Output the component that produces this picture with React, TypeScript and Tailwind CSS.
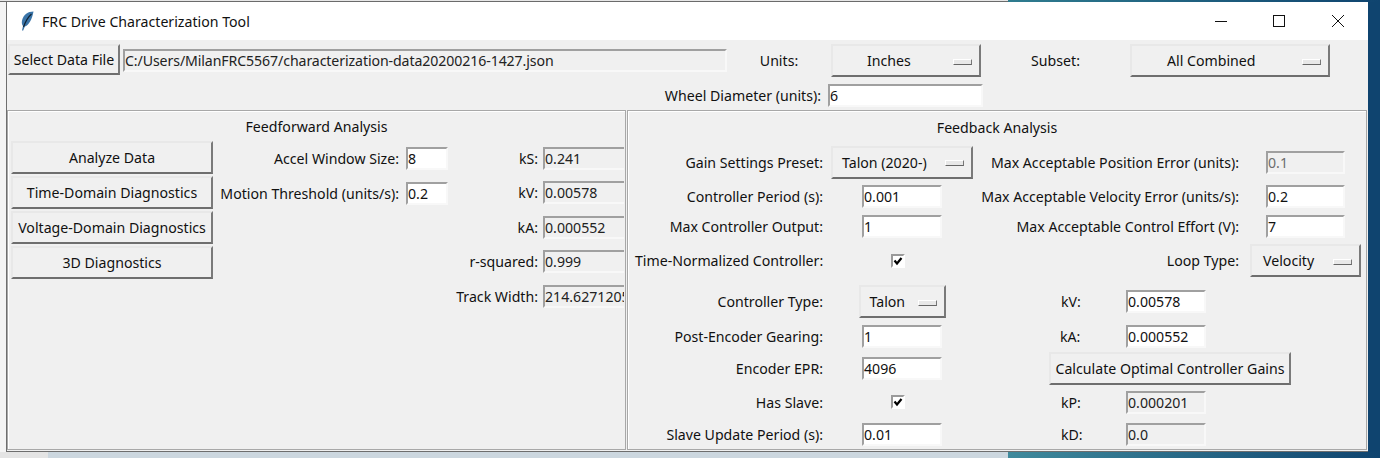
const raised = 'border-2 border-t-[#e8e8e8] border-l-[#e8e8e8] border-r-[#7a7a7a] border-b-[#6e6e6e] bg-[#f0f0f0]'

function Btn({ label, className = '' }: { label: string; className?: string }) {
  return (
    <button className={`${raised} flex items-center justify-center text-[#111] whitespace-nowrap ${className}`}>
      {label}
    </button>
  )
}

function OptionMenu({ label, className = '' }: { label: string; className?: string }) {
  return (
    <div className={`${raised} relative flex items-center text-[#111] whitespace-nowrap ${className}`}>
      <span>{label}</span>
      <span className="absolute right-[7px] top-1/2 -mt-[2px] h-[6px] w-[19px] border border-t-[#fff] border-l-[#fff] border-r-[#777] border-b-[#666] bg-[#e8e8e8]" />
    </div>
  )
}

function Entry({
  value,
  width,
  tone = 'white',
  className = '',
}: {
  value: string
  width: string
  tone?: 'white' | 'readonly' | 'disabled'
  className?: string
}) {
  const bg = tone === 'white' ? 'bg-white text-[#111]' : tone === 'readonly' ? 'bg-[#f0f0f0] text-[#222]' : 'bg-[#f0f0f0] text-[#6d6d6d]'
  return (
    <input
      readOnly
      value={value}
      className={`${bg} ${width} h-[23px] border-2 border-t-[#a0a0a0] border-l-[#a0a0a0] border-r-[#f8f8f8] border-b-[#f8f8f8] px-0 outline-none ${className}`}
    />
  )
}

function Check() {
  return (
    <div className="mr-[8px] flex h-[14px] w-[14px] items-center justify-center border-2 border-t-[#9a9a9a] border-l-[#9a9a9a] border-r-white border-b-white bg-white">
      <svg viewBox="0 0 10 10" className="h-[10px] w-[10px]">
        <path d="M1.5 4.5 L4 7.5 L8.5 2" fill="none" stroke="#000" strokeWidth="2.2" />
      </svg>
    </div>
  )
}

function Label({ children, className = '' }: { children: string; className?: string }) {
  return <div className={`text-[#111] whitespace-nowrap ${className}`}>{children}</div>
}

function TitleBar() {
  return (
    <div className="flex h-[38px] items-center bg-white">
      <svg viewBox="0 0 14 20" className="ml-[13px] h-[20px] w-[14px]">
        <path d="M13.5 0.5 C8 0.5 3.5 3.5 2 9.5 C1.5 12 2 14 3 15 L2 19.5 L3.2 19.5 L4.8 15.5 C8.5 14.5 12 9 13.5 0.5 Z" fill="#3a74a8" />
        <path d="M11.5 3 C8 6 5.5 10.5 3.5 16" fill="none" stroke="#0f2233" strokeWidth="1.2" />
      </svg>
      <span className="ml-[8px] text-[#111]">FRC Drive Characterization Tool</span>
      <svg viewBox="0 0 12 12" className="ml-auto h-[12px] w-[12px]">
        <path d="M0 6.5 H12" stroke="#111" strokeWidth="1" />
      </svg>
      <svg viewBox="0 0 12 12" className="ml-[46px] h-[12px] w-[12px]">
        <rect x="0.5" y="0.5" width="11" height="11" fill="none" stroke="#111" />
      </svg>
      <svg viewBox="0 0 12 12" className="ml-[47px] mr-[24px] h-[12px] w-[12px]">
        <path d="M0 0 L12 12 M12 0 L0 12" stroke="#111" strokeWidth="1" />
      </svg>
    </div>
  )
}

function TopControls() {
  return (
    <div className="grid h-[70px] grid-cols-[116px_604px_104px_150px_149px_200px] grid-rows-[40px_30px] items-center">
      <Btn label="Select Data File" className="ml-[1px] h-[31px] w-[112px] self-start mt-[4px]" />
      <Entry value="C:/Users/MilanFRC5567/characterization-data20200216-1427.json" width="w-[604px]" tone="readonly" className="self-start mt-[9px] tracking-[-0.1px]" />
      <Label className="text-center">Units:</Label>
      <OptionMenu label="Inches" className="h-[33px] w-[150px] self-start mt-[4px] pl-[34px]" />
      <Label className="text-center">Subset:</Label>
      <OptionMenu label="All Combined" className="h-[33px] w-[200px] self-start mt-[4px] pl-[35px]" />
      <Label className="col-span-3 pr-[10px] text-right">Wheel Diameter (units):</Label>
      <Entry value="6" width="w-[155px]" className="-ml-[3px] mt-[1px]" />
    </div>
  )
}

function Feedforward() {
  const results = [
    ['kS:', '0.241'],
    ['kV:', '0.00578'],
    ['kA:', '0.000552'],
    ['r-squared:', '0.999'],
    ['Track Width:', '214.6271205'],
  ]
  const buttons = ['Analyze Data', 'Time-Domain Diagnostics', 'Voltage-Domain Diagnostics', '3D Diagnostics']
  const inputs = [
    ['Accel Window Size:', '8'],
    ['Motion Threshold (units/s):', '0.2'],
  ]
  return (
    <section className="h-[340px] w-[619px] shrink-0 overflow-hidden border border-[#a8a8a8] shadow-[inset_1px_1px_0_#fff]">
      <div className="flex h-[30px] items-center justify-center pt-[1px] text-[#111]">Feedforward Analysis</div>
      <div className="flex">
        <div className="ml-[3px] flex w-[202px] flex-col gap-[2px]">
          {buttons.map((b) => (
            <Btn key={b} label={b} className="h-[33px] w-[202px]" />
          ))}
        </div>
        <div className="flex w-[235px] flex-col">
          {inputs.map(([l, v]) => (
            <div key={l} className="flex h-[35px] items-center justify-end">
              <Label className="mr-[7px]">{l}</Label>
              <Entry value={v} width="w-[42px]" />
            </div>
          ))}
        </div>
        <div className="flex flex-1 flex-col pr-[1px]">
          {results.map(([l, v]) => (
            <div key={l} className="flex h-[34.5px] items-center justify-end">
              <Label className="mr-[5px]">{l}</Label>
              <Entry value={v} width="w-[81px]" tone="readonly" className="border-r-0" />
            </div>
          ))}
        </div>
      </div>
    </section>
  )
}

function Feedback() {
  return (
    <section className="h-[340px] flex-1 overflow-hidden border border-[#a8a8a8] shadow-[inset_1px_1px_0_#fff]">
      <div className="flex h-[33px] items-center justify-center text-[#111]">Feedback Analysis</div>
      <div className="grid grid-cols-[198px_152px_142px_126px_119px] grid-rows-[36px_33px_27px_41px_41px_29px_35px_32px_33px] items-center">
        <Label className="pr-[3px] text-right">Gain Settings Preset:</Label>
        <div className="flex justify-center">
          <OptionMenu label="Talon (2020-)" className="h-[33px] w-[142px] pl-[9px]" />
        </div>
        <Label className="col-span-2 pr-[7px] text-right">Max Acceptable Position Error (units):</Label>
        <div className="flex justify-center">
          <Entry value="0.1" width="w-[79px]" tone="disabled" />
        </div>

        <Label className="pr-[3px] text-right">Controller Period (s):</Label>
        <div className="flex justify-center">
          <Entry value="0.001" width="w-[80px]" />
        </div>
        <Label className="col-span-2 pr-[7px] text-right">Max Acceptable Velocity Error (units/s):</Label>
        <div className="flex justify-center">
          <Entry value="0.2" width="w-[79px]" />
        </div>

        <Label className="pr-[3px] text-right">Max Controller Output:</Label>
        <div className="flex justify-center">
          <Entry value="1" width="w-[80px]" />
        </div>
        <Label className="col-span-2 pr-[7px] text-right">Max Acceptable Control Effort (V):</Label>
        <div className="flex justify-center">
          <Entry value="7" width="w-[79px]" />
        </div>

        <Label className="pl-[7px]">Time-Normalized Controller:</Label>
        <div className="flex justify-center">
          <Check />
        </div>
        <Label className="col-span-2 pr-[7px] text-right">Loop Type:</Label>
        <div className="flex justify-center">
          <OptionMenu label="Velocity" className="h-[33px] w-[111px] pl-[11px]" />
        </div>

        <Label className="pr-[3px] text-right">Controller Type:</Label>
        <div className="flex justify-center">
          <OptionMenu label="Talon" className="h-[33px] w-[87px] pl-[9px]" />
        </div>
        <Label className="pl-[83px]">kV:</Label>
        <div className="flex">
          <Entry value="0.00578" width="w-[80px]" className="ml-[6px]" />
        </div>
        <div />

        <Label className="pr-[3px] text-right">Post-Encoder Gearing:</Label>
        <div className="flex justify-center">
          <Entry value="1" width="w-[80px]" />
        </div>
        <Label className="pl-[82px]">kA:</Label>
        <div className="flex">
          <Entry value="0.000552" width="w-[80px]" className="ml-[6px]" />
        </div>
        <div />

        <Label className="pr-[3px] text-right">Encoder EPR:</Label>
        <div className="flex justify-center">
          <Entry value="4096" width="w-[80px]" />
        </div>
        <div className="col-span-3 pl-[71px]">
          <Btn label="Calculate Optimal Controller Gains" className="h-[33px] w-[242px]" />
        </div>

        <Label className="pr-[3px] text-right">Has Slave:</Label>
        <div className="flex justify-center">
          <Check />
        </div>
        <Label className="pl-[83px]">kP:</Label>
        <div className="flex">
          <Entry value="0.000201" width="w-[80px]" tone="readonly" className="ml-[6px]" />
        </div>
        <div />

        <Label className="pr-[3px] text-right">Slave Update Period (s):</Label>
        <div className="flex justify-center">
          <Entry value="0.01" width="w-[80px]" />
        </div>
        <Label className="pl-[83px]">kD:</Label>
        <div className="flex">
          <Entry value="0.0" width="w-[80px]" tone="readonly" className="ml-[6px]" />
        </div>
        <div />
      </div>
    </section>
  )
}

export default function App() {
  return (
    <div className="h-[458px] w-[1380px] overflow-hidden bg-[#0f446f] font-['Noto_Sans',sans-serif] text-[14.15px] leading-[17px]">
      <div className="flex h-[2px]">
        <div className="h-full w-[1008px] border-b border-[#6b6b6b] bg-[#e6e6e6]" />
        <div className="h-full flex-1 bg-[linear-gradient(90deg,#2f7c8f,#0f446f)]" />
      </div>
      <div className="flex">
        <div className="h-[450px] w-[6px] bg-[#f4f4f4]" />
        <div className="h-[450px] w-[1362px] border-b border-l border-[#6e6e6e] bg-[#f0f0f0]">
          <TitleBar />
          <TopControls />
          <div className="flex gap-[1px] pr-[1px]">
            <Feedforward />
            <Feedback />
          </div>
        </div>
      </div>
      <div className="flex h-[6px]">
        <div className="w-[48px] bg-[#e4e4e4]" />
        <div className="w-[960px] bg-[#ccd7df]" />
        <div className="flex-1 bg-[linear-gradient(90deg,#3f8a9c,#0f446f)]" />
      </div>
    </div>
  )
}
